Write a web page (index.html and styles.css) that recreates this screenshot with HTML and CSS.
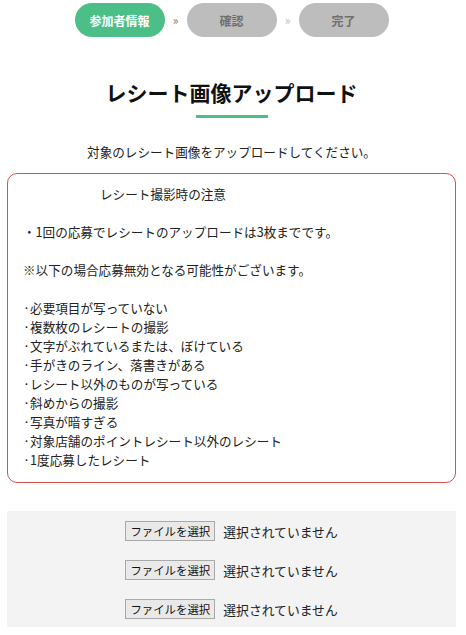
FILE: index.html
```html
<!DOCTYPE html>
<html lang="ja">
<head>
<meta charset="utf-8">
<title>レシート画像アップロード</title>
<link rel="stylesheet" href="styles.css">
</head>
<body>
<div class="page">
  <ol class="steps">
    <li class="step step-active">参加者情報</li>
    <li class="sep sep-dark">»</li>
    <li class="step">確認</li>
    <li class="sep sep-light">»</li>
    <li class="step">完了</li>
  </ol>

  <h1 class="title">レシート画像アップロード</h1>
  <div class="title-bar"></div>

  <p class="lead">対象のレシート画像をアップロードしてください。</p>

  <div class="notice">
    <div class="notice-head">レシート撮影時の注意</div>
    <div class="blank"></div>
    <div>・1回の応募でレシートのアップロードは3枚までです。</div>
    <div class="blank"></div>
    <div>※以下の場合応募無効となる可能性がございます。</div>
    <div class="blank"></div>
    <div>·必要項目が写っていない</div>
    <div>·複数枚のレシートの撮影</div>
    <div>·文字がぶれているまたは、ぼけている</div>
    <div>·手がきのライン、落書きがある</div>
    <div>·レシート以外のものが写っている</div>
    <div>·斜めからの撮影</div>
    <div>·写真が暗すぎる</div>
    <div>·対象店舗のポイントレシート以外のレシート</div>
    <div>·1度応募したレシート</div>
  </div>

  <div class="uploads">
    <div class="file-row"><button class="file-btn" type="button">ファイルを選択</button><span class="file-name">選択されていません</span></div>
    <div class="file-row"><button class="file-btn" type="button">ファイルを選択</button><span class="file-name">選択されていません</span></div>
    <div class="file-row"><button class="file-btn" type="button">ファイルを選択</button><span class="file-name">選択されていません</span></div>
  </div>
</div>
</body>
</html>
```

FILE: styles.css
```css
* { box-sizing: border-box; }

html, body {
  margin: 0;
  padding: 0;
  background: #ffffff;
}

body {
  font-family: "Noto Sans CJK JP", "Noto Sans", sans-serif;
  color: #222222;
  font-size: 12.6px;
}

.page {
  padding: 3px 10px 0 7px;
}

.steps {
  list-style: none;
  margin: 0;
  padding: 0;
  display: flex;
  justify-content: center;
  align-items: center;
}

.step {
  width: 90px;
  height: 34px;
  border-radius: 17px;
  background: #bdbdbd;
  color: #6f6f6f;
  font-weight: bold;
  font-size: 12px;
  display: flex;
  align-items: center;
  justify-content: center;
}

.step-active {
  background: #4cbf88;
  color: #ffffff;
}

.sep {
  width: 22px;
  text-align: center;
  font-size: 12px;
  line-height: 34px;
}

.sep-dark { color: #777777; }
.sep-light { color: #bbbbbb; }

.title {
  margin: 43px 0 0;
  text-align: center;
  font-size: 21px;
  line-height: 24px;
  font-weight: bold;
  color: #111111;
}

.title-bar {
  width: 72px;
  height: 3px;
  background: #4cbf88;
  margin: 11px auto 0;
}

.lead {
  margin: 24px 0 0;
  text-align: center;
  font-size: 12.6px;
  line-height: 19px;
}

.notice {
  margin-top: 12px;
  border: 1px solid #d94f4f;
  border-radius: 10px;
  padding: 10px 14px 13px 15px;
  font-size: 12.6px;
  line-height: 19px;
  min-height: 310px;
}

.notice-head {
  padding-left: 77px;
}

.blank {
  height: 19px;
}

.uploads {
  margin-top: 28px;
  background: #f3f3f3;
  padding: 10px 0 8px;
  display: flex;
  flex-direction: column;
  align-items: center;
  gap: 19px;
}

.file-row {
  display: flex;
  align-items: center;
  height: 20px;
}

.file-btn {
  width: 90px;
  height: 20px;
  padding: 0;
  font-family: "Noto Sans CJK JP", sans-serif;
  font-size: 11.4px;
  line-height: 18px;
  color: #111111;
  background: #e9e9e9;
  border: 1px solid #a9a9a9;
  border-radius: 0;
}

.file-name {
  margin-left: 8px;
  font-size: 12.8px;
  color: #222222;
}
```
